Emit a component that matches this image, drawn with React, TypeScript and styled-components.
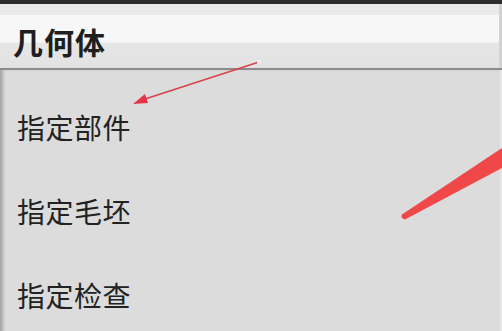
import React from 'react';
import styled, { createGlobalStyle } from 'styled-components';

// =============================================================================
// Global
// =============================================================================

const GlobalStyle = createGlobalStyle`
  html, body {
    margin: 0;
    padding: 0;
    background: #dcdcdc;
  }
  body {
    font-family: "Noto Sans CJK SC", "Noto Sans", sans-serif;
  }
`;

// =============================================================================
// Styled Components
// =============================================================================

const Window = styled.div`
  position: relative;
  width: 502px;
  height: 331px;
  display: flex;
  flex-direction: column;
  overflow: hidden;
  background: #dcdcdc;
`;

const TopBar = styled.div`
  height: 4px;
  background: #2e2e2e;
  flex-shrink: 0;
`;

const Header = styled.div`
  height: 64px;
  flex-shrink: 0;
  display: flex;
  align-items: flex-end;
  padding: 0 0 10px 13px;
  box-sizing: border-box;
  background: linear-gradient(
    to bottom,
    #eaeaea 0px,
    #eaeaea 11px,
    #f7f7f7 11px,
    #f7f7f7 38px,
    #e6e6e6 39px,
    #e2e2e2 64px
  );
  border-right: 3px solid #d2d2d2;
`;

const Title = styled.h1`
  margin: 0;
  font-size: 30px;
  line-height: 34px;
  font-weight: 700;
  color: #1e1e1e;
  letter-spacing: 1px;
`;

const Divider = styled.div`
  height: 2px;
  flex-shrink: 0;
  background: #8c8c8c;
  box-shadow: 0 1px 2px rgba(0, 0, 0, 0.15);
`;

const Body = styled.div`
  flex: 1;
  display: flex;
  flex-direction: column;
  padding-top: 15px;
  background: #dcdcdc;
  box-shadow: inset 4px 0 3px -1px #a9a9a9;
  border-right: 2px solid #e6e6e6;
`;

const Item = styled.div`
  height: 84px;
  display: flex;
  align-items: center;
  padding-left: 17px;
  font-size: 28px;
  color: #222;
  letter-spacing: 0.5px;
`;

const BottomBar = styled.div`
  height: 3px;
  flex-shrink: 0;
  background: #2e2e2e;
`;

const Overlay = styled.svg`
  position: absolute;
  inset: 0;
  pointer-events: none;
`;

// =============================================================================
// Main Component
// =============================================================================

const items = ['指定部件', '指定毛坯', '指定检查'];

const Annotations = () => (
  <Overlay width={502} height={331} viewBox="0 0 502 331">
    <line x1={259} y1={62} x2={142} y2={100} stroke="#d8434e" strokeWidth={1.6} />
    <polygon points="133,104 145,94 148,103" fill="#e8344a" />
    <rect x={257} y={60} width={4} height={4} fill="#f2f2f2" opacity={0.8} />
    <path
      d="M 502 148 L 502 168 L 405 219.5 Q 400 218 402 214.5 Z"
      fill="#f04848"
    />
  </Overlay>
);

export default function App() {
  return (
    <>
      <GlobalStyle />
      <Window>
        <TopBar />
        <Header>
          <Title>几何体</Title>
        </Header>
        <Divider />
        <Body>
          {items.map((label) => (
            <Item key={label}>{label}</Item>
          ))}
        </Body>
        <BottomBar />
        <Annotations />
      </Window>
    </>
  );
}
